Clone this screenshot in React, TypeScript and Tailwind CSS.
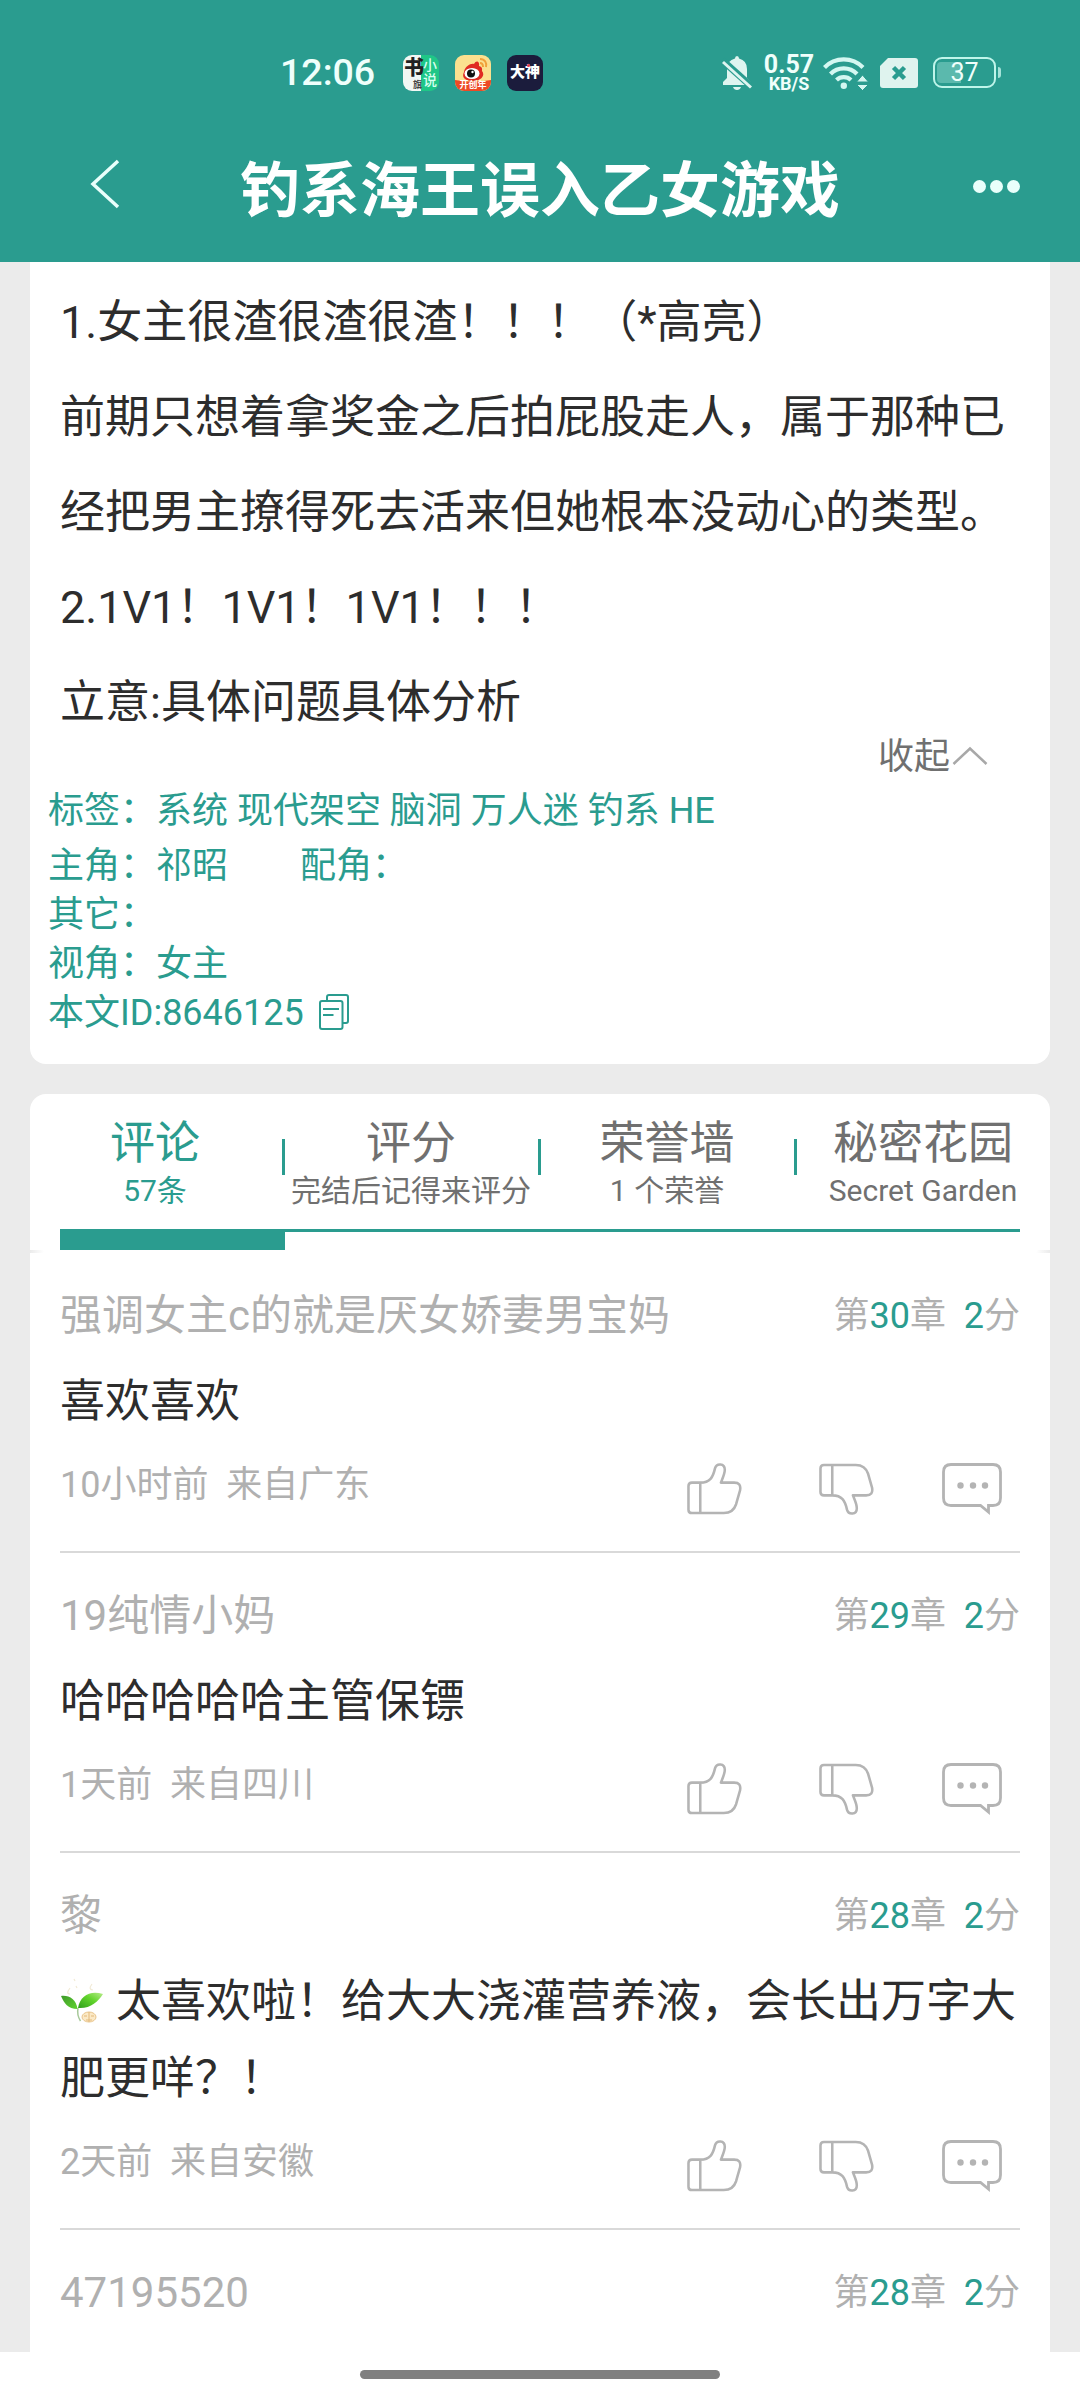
type Comment = {
  name: string;
  chapter: number;
  body: string;
  time: string;
  place: string;
  sprout?: boolean;
};

const comments: Comment[] = [
  { name: "强调女主c的就是厌女娇妻男宝妈", chapter: 30, body: "喜欢喜欢", time: "10小时前", place: "来自广东" },
  { name: "19纯情小妈", chapter: 29, body: "哈哈哈哈哈主管保镖", time: "1天前", place: "来自四川" },
  {
    name: "黎",
    chapter: 28,
    body: "太喜欢啦！给大大浇灌营养液，会长出万字大肥更咩？！",
    time: "2天前",
    place: "来自安徽",
    sprout: true,
  },
];

const tabs = [
  { title: "评论", sub: "57条" },
  { title: "评分", sub: "完结后记得来评分" },
  { title: "荣誉墙", sub: "1 个荣誉" },
  { title: "秘密花园", sub: "Secret Garden" },
];

function ThumbIcon(props: React.SVGProps<SVGSVGElement>) {
  return (
    <svg viewBox="0 0 56 52" fill="none" stroke="#b4b4b4" strokeWidth="2.6" strokeLinejoin="round" {...props}>
      <path d="M13.5 19.5H5q-3.5 0-3.5 3.5v24q0 3.5 3.5 3.5h32.5q9.5 0 12.5-9l4-14q1.500-8-6-8H34.500c2-5 4-9 4-13 0-7-8.500-7-10-1.500-2 9-5 14.500-15 14.500V50" />
    </svg>
  );
}

function ReplyIcon() {
  return (
    <svg viewBox="0 0 60 52" fill="none" className="h-[52px] w-[60px]">
      <path
        d="M9 1.5h42q7.5 0 7.5 7.5v26q0 7.5-7.5 7.5h-4.500v6.500l-8-6.500H9Q1.500 42.500 1.500 35V9Q1.500 1.500 9 1.500Z"
        stroke="#b4b4b4"
        strokeWidth="2.8"
      />
      <circle cx="18.5" cy="22.5" r="3.2" fill="#b4b4b4" />
      <circle cx="31" cy="22.5" r="3.2" fill="#b4b4b4" />
      <circle cx="43" cy="22.5" r="3.2" fill="#b4b4b4" />
    </svg>
  );
}

function SproutIcon() {
  return (
    <svg viewBox="0 0 44 48" fill="none" className="mr-[12px] inline-block h-[48px] w-[44px] align-[-7px]">
      <defs>
        <linearGradient id="leafA" x1="0" y1="0" x2="1" y2="1">
          <stop offset="0" stopColor="#3f9a2a" />
          <stop offset="1" stopColor="#5fd32f" />
        </linearGradient>
        <linearGradient id="leafB" x1="0" y1="1" x2="1" y2="0">
          <stop offset="0" stopColor="#2f9e1c" />
          <stop offset="0.55" stopColor="#62d42c" />
          <stop offset="1" stopColor="#b9ec8c" />
        </linearGradient>
      </defs>
      <path d="M18 32c-1 5 0 9 2.5 13" stroke="#a8c99a" strokeWidth="1.5" />
      <path d="M1 20c8-1 15 3 16.500 13C8 33 4 27 1 20Z" fill="url(#leafA)" />
      <path d="M43 18c-12-4-23 1-25 14 12 1 20-6 25-14Z" fill="url(#leafB)" />
      <path d="M10 12c-3 4-3 6 0 6M32 8c-3 4-2 6 1 6M14 3l1 2M16 10l1 2" stroke="#f1ead6" strokeWidth="1.2" />
      <ellipse cx="29" cy="41" rx="7" ry="5" fill="#fbe9c6" stroke="#e9c58c" strokeWidth="1" />
      <path d="M29 36v10M24 40h3M31 40h3M26 44h6" stroke="#e3b878" strokeWidth="1" />
    </svg>
  );
}

function CopyIcon() {
  return (
    <svg viewBox="0 0 30 36" fill="none" stroke="#2a9c8f" strokeWidth="2" className="mb-[4px] ml-[15px] h-[36px] w-[30px]">
      <path d="M8 7V3q0-2 2-2H27q2 0 2 2V27q0 2-2 2H24" />
      <rect x="1" y="7" width="22.5" height="28" rx="2" />
      <path d="M4 15h16M4 21h10.5" />
    </svg>
  );
}

function StatusBar() {
  return (
    <div className="flex h-[145px] items-center pl-[280px] text-[#effffb]">
      <span className="w-[123px] text-[37.5px] leading-none font-medium">12:06</span>

      {/* Running apps */}
      <div className="flex gap-4">
        <div className="relative h-9 w-9 overflow-hidden rounded-[9px] bg-gradient-to-r from-[#f1f7f4] from-50% to-[#1fc687] to-50%">
          <span className="absolute top-[1px] left-[1px] text-[20px] leading-[24px] font-black text-[#222]">书</span>
          <span className="absolute top-[25px] left-[10px] text-[9px] leading-[10px] font-bold text-[#444]">旗</span>
          <span className="absolute top-[3px] right-[2px] w-[14px] text-[14px] leading-[15px] font-medium text-[#d8fff0]">
            小说
          </span>
        </div>
        <div className="relative h-9 w-9 overflow-hidden rounded-[9px] bg-[#fbe08f]">
          <svg viewBox="0 0 36 36" className="h-9 w-9">
            <path d="M9 17c1-6 7-9 10-8 2-4 6-3 5 2 4 1 3 4 3 5 4 5-2 10-9 10S6 23 9 17Z" fill="#e02b22" />
            <ellipse cx="17" cy="18.5" rx="7.5" ry="5.5" fill="#fff" />
            <circle cx="16" cy="18.5" r="4" fill="#111" />
            <circle cx="17.5" cy="17" r="1.2" fill="#fff" />
            <path d="M25 4c5 0 7 4 6 8M25 8c3 0 3 2 3 4" stroke="#f0a23a" strokeWidth="2" fill="none" />
            <path d="M0 25q18 3 36 0v11H0Z" fill="#ee4a26" />
          </svg>
          <span className="absolute bottom-0 left-0 w-9 text-center text-[9px] leading-[11px] font-bold text-white">
            开创年
          </span>
        </div>
        <div className="relative grid h-9 w-9 place-items-center rounded-[9px] bg-[#1b1c3c]">
          <span className="text-[15px] leading-none font-black whitespace-nowrap text-white">大神</span>
          <span className="absolute top-[9px] left-[20px] h-[3px] w-[3px] rounded-full bg-[#e2364b]" />
        </div>
      </div>

      {/* Mute bell */}
      <svg viewBox="0 0 30 34" className="ml-[179px] h-[34px] w-[30px]" fill="#dff5f0">
        <path d="M13 2.5Q13 0 15 0t2 2.500Q25 4.500 25 13v9l4 4v3H1v-3l4-4v-9Q5 4.500 13 2.500Z" />
        <path d="M11 31h8q-1 3-4 3t-4-3Z" />
        <path d="M0 4 30 31" stroke="#2a9c8f" strokeWidth="7" />
        <path d="M1 6 29 31.5" stroke="#dff5f0" strokeWidth="3" />
      </svg>

      <div className="ml-[10px] flex w-[54px] flex-col items-center font-bold">
        <span className="text-[25px] leading-[22px]">0.57</span>
        <span className="text-[18px] leading-[16px]">KB/S</span>
      </div>

      {/* Wifi with traffic arrows */}
      <svg viewBox="0 0 46 34" className="ml-[7px] h-[34px] w-[46px]" fill="none" stroke="#d4f7f1" strokeWidth="4.2">
        <path d="M1.5 11.5a27 27 0 0 1 38.500 0" />
        <path d="M7.5 18a18.500 18.500 0 0 1 26.500 0" />
        <path d="M13.5 24a10.500 10.500 0 0 1 14.500 0" />
        <circle cx="20.8" cy="29.8" r="3.2" fill="#d4f7f1" stroke="none" />
        <path d="M39.5 19l6 7h-12ZM39.500 34.500l6-6h-12Z" fill="#d4f7f1" stroke="#2a9c8f" strokeWidth="1" />
      </svg>

      {/* Empty SIM */}
      <svg viewBox="0 0 38 30" className="ml-[11px] h-[30px] w-[38px]" fill="#dff3ee">
        <path d="M8 0h27q3 0 3 3v24q0 3-3 3H3q-3 0-3-3V8Z" />
        <path d="M13.5 9.5l11 11M24.500 9.500l-11 11" stroke="#2a9c8f" strokeWidth="4.5" />
      </svg>

      {/* Battery */}
      <div className="ml-[15px] flex items-center gap-[2px]">
        <div className="relative grid h-[31px] w-[63px] place-items-center rounded-[9px] border-[2.5px] border-[#bff5ea]">
          <div className="absolute top-[2.5px] left-[2px] h-[21px] w-[24px] rounded-l-[4px] bg-[#5bb9ad]" />
          <span className="relative text-[25px] leading-none">37</span>
        </div>
        <div className="h-[11px] w-[3px] rounded-r-sm bg-[#a6e3d9]" />
      </div>
    </div>
  );
}

function CommentHead({ name, chapter }: { name: string; chapter: number }) {
  return (
    <div className="flex h-[60px] items-center justify-between text-[#b0b0b0]">
      <span className="text-[42px] leading-none">{name}</span>
      <span className="text-[36px] leading-none whitespace-pre">
        第<span className="text-[#2a9c8f]">{chapter}</span>章{"  "}
        <span className="text-[#2a9c8f]">2</span>分
      </span>
    </div>
  );
}

function CommentItem({ comment }: { comment: Comment }) {
  return (
    <div className="border-b-2 border-[#d9d9d9] pt-[33px] pb-[36px]">
      <CommentHead name={comment.name} chapter={comment.chapter} />
      <p className="mt-[17px] text-[45px] leading-[77px] text-[#2d2d2d]">
        {comment.sprout && <SproutIcon />}
        {comment.body}
      </p>
      <div className="mt-[15px] flex h-[60px] items-center pr-[18px]">
        <span className="flex-1 text-[36px] leading-none whitespace-pre text-[#b0b0b0]">
          {comment.time}
          {"  "}
          {comment.place}
        </span>
        <div className="flex items-center pt-[8px]">
          <ThumbIcon className="h-[52px] w-[55px]" />
          <ThumbIcon className="ml-[77px] h-[52px] w-[55px] -scale-y-100" />
          <div className="ml-[68px]">
            <ReplyIcon />
          </div>
        </div>
      </div>
    </div>
  );
}

export default function App() {
  return (
    <div className="flex h-[2400px] w-[1080px] flex-col overflow-hidden bg-[#ebebeb] font-[Roboto,'Noto_Sans_CJK_SC',sans-serif]">
      {/* Header */}
      <header className="h-[262px] shrink-0 bg-[#2a9c8f]">
        <StatusBar />
        <div className="flex h-[88px] items-center pr-[60px] pl-[90px] text-white">
          <svg viewBox="0 0 30 50" fill="none" stroke="#e9fffb" strokeWidth="3.5" className="mb-[11px] h-[50px] w-[30px]">
            <path d="M28 2 3 25 28 48" />
          </svg>
          <h1 className="mt-[5px] ml-[120px] text-[60px] leading-none font-bold">钓系海王误入乙女游戏</h1>
          <div className="mb-[5px] ml-auto flex gap-[4px]">
            <i className="h-[13px] w-[13px] rounded-full bg-[#e9fffb]" />
            <i className="h-[13px] w-[13px] rounded-full bg-[#e9fffb]" />
            <i className="h-[13px] w-[13px] rounded-full bg-[#e9fffb]" />
          </div>
        </div>
      </header>

      {/* Novel info */}
      <section className="mx-[30px] h-[802px] shrink-0 rounded-b-[16px] bg-white">
        <div className="px-[30px] pt-[13px] text-[45px] leading-[95px] whitespace-nowrap text-[#2d2d2d]">
          <p>1.女主很渣很渣很渣！！！（*高亮）</p>
          <p>前期只想着拿奖金之后拍屁股走人，属于那种已</p>
          <p>经把男主撩得死去活来但她根本没动心的类型。</p>
          <p>2.1V1！1V1！1V1！！！</p>
          <p>立意:具体问题具体分析</p>
        </div>
        <div className="-mt-[14px] flex h-[40px] items-center justify-end pr-[62px] text-[36px] leading-none text-[#707070]">
          <span className="mt-[2px]">收起</span>
          <svg viewBox="0 0 36 20" fill="none" stroke="#a8a8a8" strokeWidth="2.5" className="ml-[2px] h-[20px] w-[36px]">
            <path d="M1.5 18 18 2.500 34.500 18" />
          </svg>
        </div>
        <div className="pt-[11px] pl-[18px] text-[36px] leading-[49px] text-[#2a9c8f]">
          <p className="mb-[6px]">标签：系统 现代架空 脑洞 万人迷 钓系 HE</p>
          <p className="flex gap-[72px]">
            <span>主角：祁昭</span>
            <span>配角：</span>
          </p>
          <p>其它：</p>
          <p>视角：女主</p>
          <p className="flex h-[49px] items-center">
            本文ID:8646125
            <CopyIcon />
          </p>
        </div>
      </section>

      {/* Tabs */}
      <section className="relative z-10 mx-[30px] mt-[30px] h-[158px] shrink-0 rounded-t-[16px] bg-white">
        <div className="-ml-[3px] grid h-[135px] w-[1024px] grid-cols-4">
          {tabs.map((tab, i) => (
            <div
              key={tab.title}
              className={
                i === 0
                  ? "relative flex flex-col items-center pt-[22px] text-[#2a9c8f]"
                  : "relative flex flex-col items-center pt-[22px] text-[#707070]"
              }
            >
              <span className="text-[45px] leading-[56px]">{tab.title}</span>
              <span className="text-[30px] leading-[38px] whitespace-nowrap">{tab.sub}</span>
              {i < 3 && <span className="absolute top-[45px] -right-[2px] h-[36px] w-[3px] bg-[#2a9c8f]" />}
            </div>
          ))}
        </div>
        <div className="mx-[30px] border-t-[3px] border-[#2a9c8f]">
          <div className="h-[18px] w-[225px] bg-[#2a9c8f]" />
        </div>
        <div className="absolute -bottom-[1px] left-0 h-[3px] w-[14px] rounded-tr-full bg-gradient-to-r from-[#ebebeb] to-white" />
        <div className="absolute right-0 -bottom-[1px] h-[3px] w-[14px] rounded-tl-full bg-gradient-to-l from-[#ebebeb] to-white" />
      </section>

      {/* Comments */}
      <section className="mx-[30px] min-h-0 flex-1 overflow-hidden bg-white px-[30px] pt-px">
        {comments.map((c) => (
          <CommentItem key={c.name} comment={c} />
        ))}
        <div className="pt-[33px]">
          <CommentHead name="47195520" chapter={28} />
        </div>
      </section>

      {/* Gesture bar */}
      <footer className="flex h-[48px] shrink-0 justify-center bg-white pt-[18px]">
        <div className="h-[9px] w-[360px] rounded-full bg-[#808080]" />
      </footer>
    </div>
  );
}
